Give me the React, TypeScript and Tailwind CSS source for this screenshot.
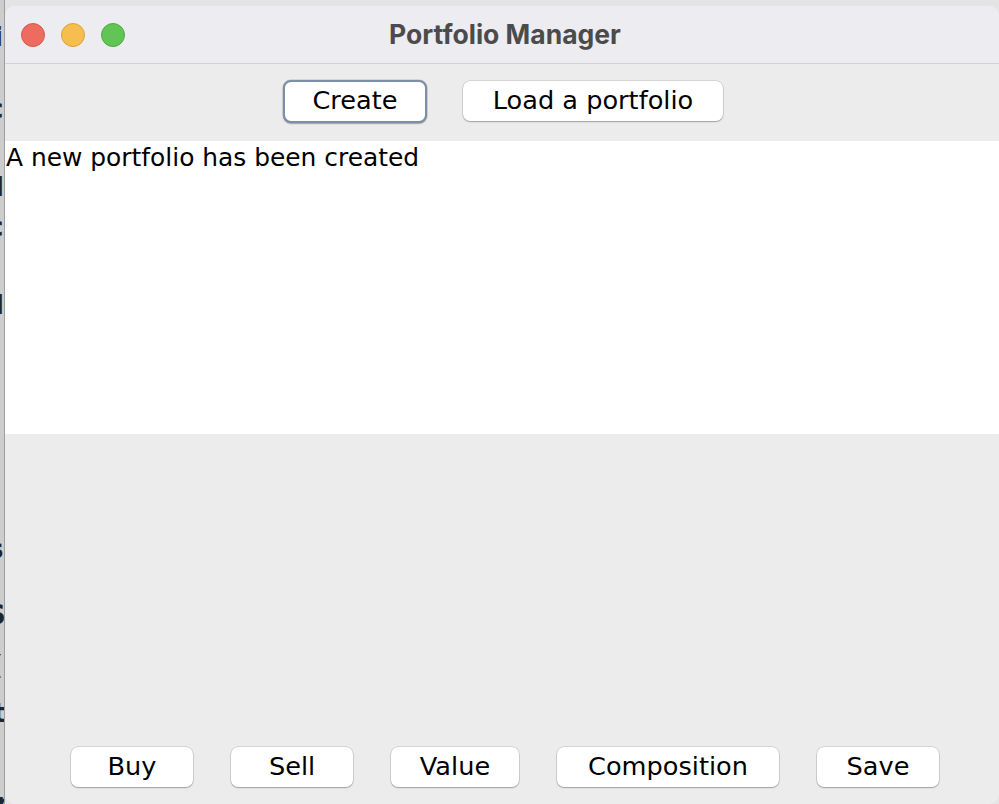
import React from "react";

const btn =
  "h-[40px] flex items-center justify-center bg-white rounded-[7px] text-black text-[25.6px] leading-none shadow-[0_0_0_0.5px_rgba(0,0,0,0.18),0_1px_1.5px_rgba(0,0,0,0.25)]";

const frag = "absolute text-[26px] leading-none font-semibold text-[#1d2630]";

export default function App() {
  return (
    <div
      className="w-[999px] h-[804px] flex overflow-hidden bg-[#e4e4e4]"
      style={{ fontFamily: '"DejaVu Sans", "Liberation Sans", sans-serif' }}
    >
      {/* background window sliver */}
      <div className="relative w-[5px] h-full overflow-hidden bg-[#cdcdcd] border-r border-[#9e9e9e]">
        <span className={`${frag} left-[-6px] top-[24px]`}>i</span>
        <span className={`${frag} left-[-12px] top-[96px] font-normal`}>c</span>
        <span className={`${frag} left-[-5px] top-[174px]`}>l</span>
        <span className={`${frag} left-[-12px] top-[214px] font-normal`}>c</span>
        <span className={`${frag} left-[-5px] top-[292px]`}>l</span>
        <span className={`${frag} left-[-12px] top-[536px] font-normal`}>s</span>
        <span className={`${frag} left-[-13px] top-[602px] font-normal`}>S</span>
        <span className={`${frag} left-[-9px] top-[652px] font-normal`}>(</span>
        <span className={`${frag} left-[-7px] top-[700px] font-normal`}>t</span>
        <span className={`${frag} left-[-4px] top-[790px] font-normal`}>r</span>
      </div>

      {/* window */}
      <div className="mt-[6px] w-[994px] h-[798px] flex flex-col bg-[#ececec] rounded-[10px] overflow-hidden">
        {/* title bar */}
        <div className="h-[58px] shrink-0 grid grid-cols-[1fr_auto_1fr] items-center bg-[#edecf0] border-b border-[#d2d2d4]">
          <div className="flex items-center gap-[16px] pl-[16px]">
            <span className="w-[24px] h-[24px] rounded-full bg-[#ee6b5f] border border-[#d4594e]" />
            <span className="w-[24px] h-[24px] rounded-full bg-[#f6be4f] border border-[#d9a23c]" />
            <span className="w-[24px] h-[24px] rounded-full bg-[#61c454] border border-[#4fa942]" />
          </div>
          <div
            className="pl-[6px] text-[26.5px] font-bold text-[#4b4b4b] leading-none"
            style={{ fontFamily: 'Inter, "Noto Sans", sans-serif' }}
          >
            Portfolio Manager
          </div>
          <div />
        </div>

        {/* top buttons */}
        <div className="h-[77px] shrink-0 flex items-center justify-center gap-[36px] pl-[2px] pb-[3px]">
          <button className={`${btn} w-[144px] h-[43px] border-[2.5px] border-[#7d8ea6] rounded-[8px]`}>
            Create
          </button>
          <button className={`${btn} w-[260px]`}>Load a portfolio</button>
        </div>

        {/* text area */}
        <div className="h-[293px] shrink-0 bg-white pl-[1px] pt-[2px]">
          <p className="text-[24.9px] leading-[30px] text-black">A new portfolio has been created</p>
        </div>

        {/* bottom */}
        <div className="flex-1 flex items-end justify-center gap-[38px] pl-[6px] pb-[17px]">
          <button className={`${btn} w-[122px]`}>Buy</button>
          <button className={`${btn} w-[122px]`}>Sell</button>
          <button className={`${btn} w-[128px]`}>Value</button>
          <button className={`${btn} w-[222px]`}>Composition</button>
          <button className={`${btn} w-[122px]`}>Save</button>
        </div>
      </div>
    </div>
  );
}
